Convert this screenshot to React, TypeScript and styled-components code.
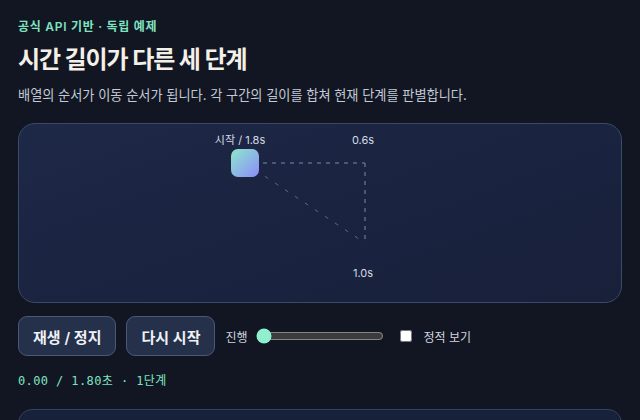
import React, { useState } from "react";
import styled, { createGlobalStyle } from "styled-components";

const Global = createGlobalStyle`
  html, body { margin: 0; padding: 0; background: #111622; }
  body { font-family: Inter, "Noto Sans CJK KR", "Noto Sans", sans-serif; color: #e6e9ef; overflow: hidden; }
  * { box-sizing: border-box; }
`;

const Page = styled.main`
  padding: 18px 18px 0;
  display: flex;
  flex-direction: column;
`;

const Eyebrow = styled.div`
  font-size: 12px;
  line-height: 17px;
  font-weight: 600;
  letter-spacing: 0.06em;
  color: #7fe3c0;
`;

const Title = styled.h1`
  margin: 8px 0 0;
  font-size: 24px;
  line-height: 34px;
  font-weight: 700;
  letter-spacing: -0.045em;
  color: #f4f0e8;
`;

const Lead = styled.p`
  margin: 8px 0 0;
  font-size: 13.2px;
  line-height: 20px;
  color: #c3c9d5;
`;

const Stage = styled.section`
  position: relative;
  margin-top: 18px;
  height: 180px;
  border: 1px solid #3a4a6b;
  border-radius: 17px;
  background: linear-gradient(160deg, #1e2947 0%, #1a2340 50%, #18203a 100%);
  overflow: hidden;
`;

const Lines = styled.svg`
  position: absolute;
  left: 0;
  top: 0;
  width: 100%;
  height: 100%;
`;

const Node = styled.div<{ $x: number; $y: number }>`
  position: absolute;
  left: ${(p) => p.$x - 14}px;
  top: ${(p) => p.$y - 14}px;
  width: 28px;
  height: 28px;
  border-radius: 7px;
  background: linear-gradient(135deg, #8ee8cc 0%, #8b8cf9 100%);
`;

const PointLabel = styled.span<{ $x: number; $y: number }>`
  position: absolute;
  left: ${(p) => p.$x}px;
  top: ${(p) => p.$y}px;
  transform: translate(-50%, -50%);
  font-size: 11px;
  line-height: 14px;
  color: #d5dae4;
  white-space: nowrap;
`;

const Controls = styled.div`
  margin-top: 13px;
  display: flex;
  align-items: center;
  gap: 10px;
`;

const Button = styled.button`
  height: 40px;
  padding: 0 14px;
  border-radius: 9px;
  border: 1px solid #4a5878;
  background: #25304a;
  color: #eef1f6;
  font-family: Inter, "Noto Sans CJK KR", sans-serif;
  font-size: 15px;
  font-weight: 600;
`;

const Field = styled.label`
  display: flex;
  align-items: center;
  gap: 8px;
  font-size: 12px;
  color: #d0d5df;
`;

const Range = styled.input`
  width: 128px;
  margin: 0;
  color-scheme: dark;
  accent-color: #8ef0cd;
`;

const Check = styled.input`
  margin: 0 4px 0 6px;
  width: 12px;
  height: 12px;
`;

const Status = styled.div`
  margin-top: 17px;
  font-family: "DejaVu Sans Mono", "Noto Sans CJK KR", monospace;
  font-size: 12px;
  line-height: 16px;
  letter-spacing: 0.4px;
  color: #7fe3c0;
`;

const Panel = styled.section`
  margin-top: 20px;
  height: 120px;
  border: 1px solid #34425f;
  border-radius: 14px;
  background: #18213a;
`;

const A = { x: 226, y: 39 };
const B = { x: 346, y: 39 };
const C = { x: 346, y: 119 };

export default function App() {
  const [t, setT] = useState(0);
  const [still, setStill] = useState(false);
  return (
    <>
      <Global />
      <Page>
        <Eyebrow>공식 API 기반 · 독립 예제</Eyebrow>
        <Title>시간 길이가 다른 세 단계</Title>
        <Lead>배열의 순서가 이동 순서가 됩니다. 각 구간의 길이를 합쳐 현재 단계를 판별합니다.</Lead>
        <Stage>
          <Lines>
            <line x1={A.x} y1={A.y} x2={B.x} y2={B.y} stroke="#5b6987" strokeWidth="1.5" strokeDasharray="4 5" />
            <line x1={B.x} y1={B.y} x2={C.x} y2={C.y} stroke="#5b6987" strokeWidth="1.5" strokeDasharray="4 5" />
            <line x1={A.x} y1={A.y} x2={C.x} y2={C.y} stroke="#5b6987" strokeWidth="1" strokeDasharray="4 8" />
          </Lines>
          <Node $x={A.x} $y={A.y} />
          <PointLabel $x={221} $y={16}>시작 / 1.8s</PointLabel>
          <PointLabel $x={B.x - 2} $y={16}>0.6s</PointLabel>
          <PointLabel $x={C.x - 2} $y={149}>1.0s</PointLabel>
        </Stage>
        <Controls>
          <Button>재생 / 정지</Button>
          <Button>다시 시작</Button>
          <Field>
            진행
            <Range type="range" min={0} max={1.8} step={0.01} value={t} onChange={(e) => setT(Number(e.target.value))} />
          </Field>
          <Field>
            <Check type="checkbox" checked={still} onChange={(e) => setStill(e.target.checked)} />
            정적 보기
          </Field>
        </Controls>
        <Status>{t.toFixed(2)} / 1.80초 · 1단계</Status>
        <Panel />
      </Page>
    </>
  );
}
